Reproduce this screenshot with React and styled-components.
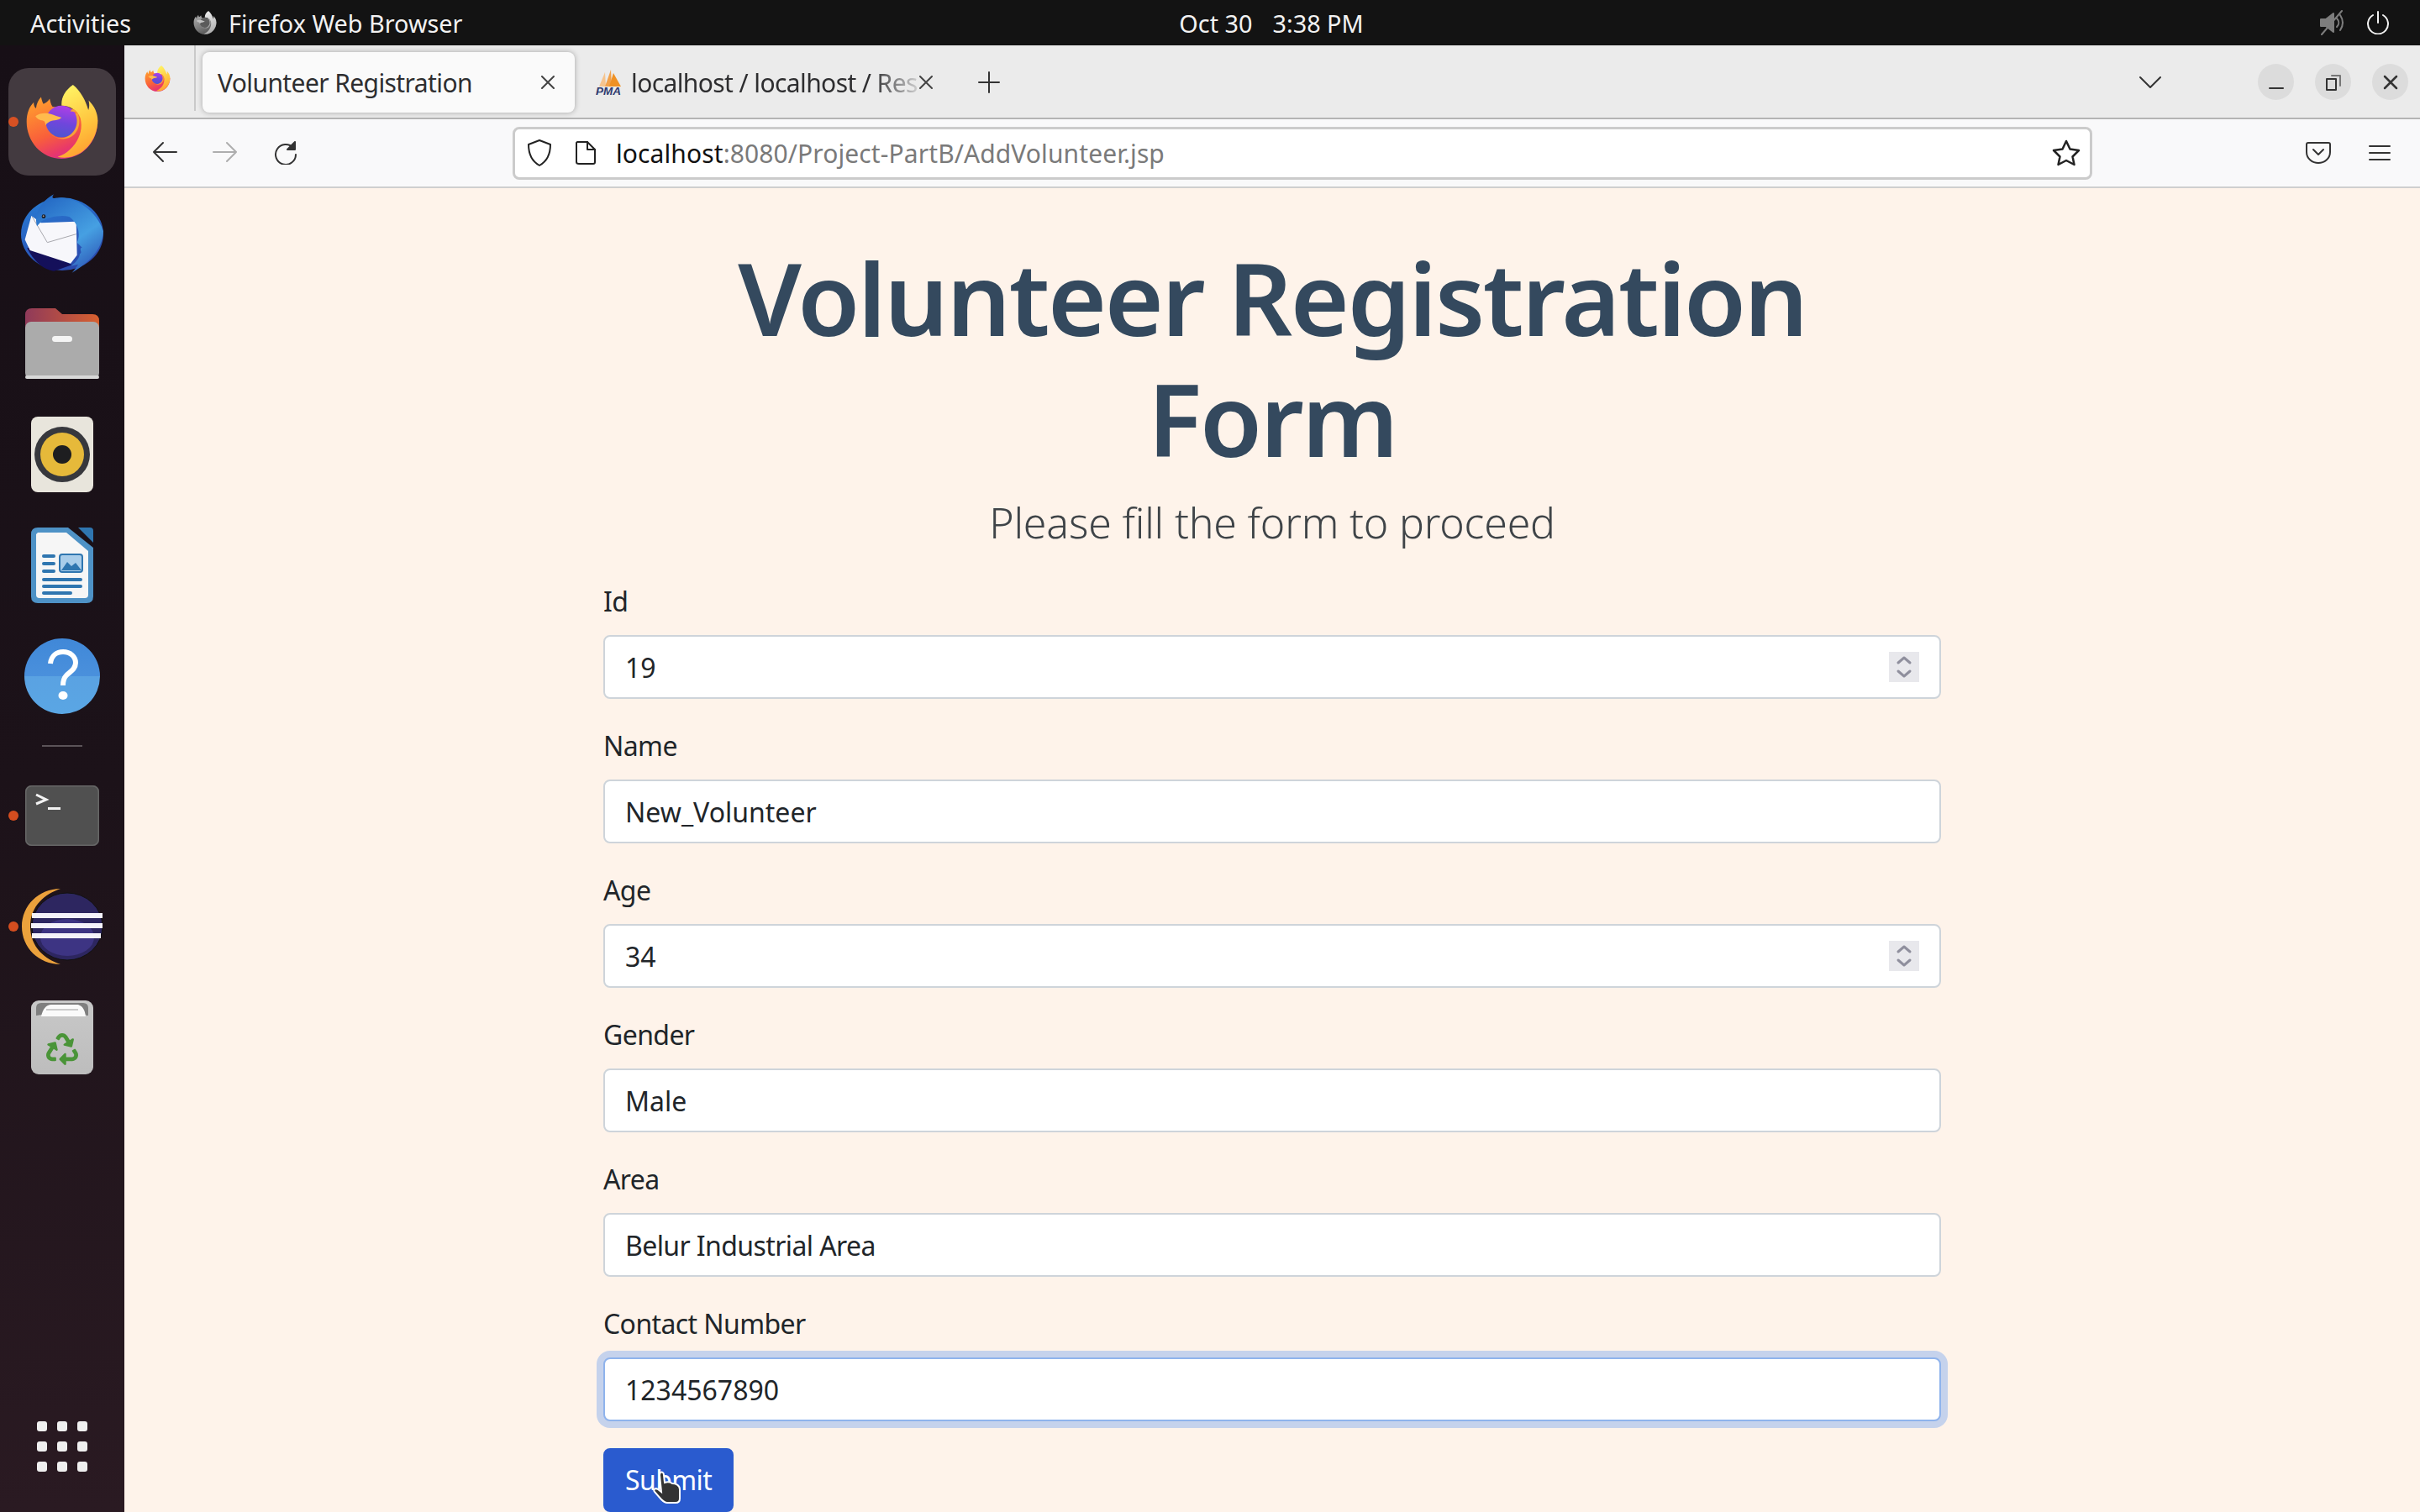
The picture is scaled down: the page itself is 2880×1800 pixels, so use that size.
import React from 'react';
import styled, { createGlobalStyle } from 'styled-components';
import { FaRecycle } from 'react-icons/fa';

const GlobalStyle = createGlobalStyle`
  html, body {
    margin: 0;
    padding: 0;
    background: #131313;
  }
  * {
    box-sizing: border-box;
  }
`;

const UI_FONT = `"Noto Sans", "Open Sans", sans-serif`;

const Screen = styled.div`
  width: 2880px;
  height: 1800px;
  overflow: hidden;
  display: flex;
  flex-direction: column;
  font-family: ${UI_FONT};
`;

const TopBar = styled.header`
  height: 54px;
  flex: none;
  background: #131313;
  color: #f2f2f2;
  display: grid;
  grid-template-columns: 1fr auto 1fr;
  align-items: center;
  padding: 0 36px;
  font-size: 28.8px;
`;

const TopLeft = styled.div`
  display: flex;
  align-items: center;
`;

const AppName = styled.div`
  display: flex;
  align-items: center;
  gap: 14px;
  margin-left: 74px;
  svg {
    filter: grayscale(1);
  }
`;

const Clock = styled.div`
  display: flex;
  gap: 24px;
  margin-left: 146px;
`;

const TopRight = styled.div`
  display: flex;
  justify-content: flex-end;
  align-items: center;
  gap: 26px;
`;

const Desktop = styled.div`
  flex: 1;
  display: flex;
  min-height: 0;
`;

const Dock = styled.nav`
  width: 148px;
  flex: none;
  background: linear-gradient(180deg, #170f16 0%, #1c1219 50%, #2a1a22 100%);
  padding: 25px 0 48px;
  display: flex;
  flex-direction: column;
  align-items: center;
`;

const DockItem = styled.div`
  position: relative;
  width: 148px;
  height: 132px;
  flex: none;
  display: flex;
  align-items: center;
  justify-content: center;
`;

const ActiveTile = styled.div`
  width: 128px;
  height: 128px;
  border-radius: 24px;
  background: #433a40;
  display: flex;
  align-items: center;
  justify-content: center;
`;

const RunDot = styled.span`
  position: absolute;
  left: 10px;
  top: 60px;
  width: 12px;
  height: 12px;
  border-radius: 50%;
  background: #e95420;
  opacity: 0.9;
`;

const DockRule = styled.div`
  width: 48px;
  height: 34px;
  flex: none;
  display: flex;
  align-items: center;
  &::after {
    content: '';
    width: 100%;
    height: 2px;
    background: #5b5358;
  }
`;

const AppGrid = styled.div`
  margin-top: auto;
  display: grid;
  grid-template-columns: repeat(3, 12px);
  gap: 12px;
  span {
    width: 12px;
    height: 12px;
    border-radius: 3px;
    background: #efefef;
  }
`;

const Browser = styled.div`
  flex: 1;
  min-width: 0;
  display: flex;
  flex-direction: column;
`;

const TabStrip = styled.div`
  height: 88px;
  flex: none;
  background: #ebebeb;
  border-bottom: 2px solid #b4b4b4;
  display: flex;
  align-items: flex-start;
  padding-top: 8px;
  color: #2e2e30;
  font-size: 30px;
`;

const ViewButton = styled.div`
  width: 85px;
  height: 78px;
  margin-top: -8px;
  padding-left: 24px;
  display: flex;
  align-items: center;
  border-right: 2px solid #c9c9c9;
  margin-right: 8px;
`;

const Tab = styled.div`
  position: relative;
  width: ${(p) => p.$width}px;
  height: 72px;
  flex: none;
  border-radius: 8px;
  display: flex;
  align-items: center;
  white-space: nowrap;
  padding-left: ${(p) => p.$pad}px;
  gap: 10px;
  background: ${(p) => (p.$active ? '#fafafa' : 'transparent')};
  box-shadow: ${(p) => (p.$active ? '0 0 6px rgba(0, 0, 0, 0.3)' : 'none')};
`;

const TabTitle = styled.span`
  letter-spacing: -0.6px;
`;

const FadeTitle = styled(TabTitle)`
  -webkit-mask-image: linear-gradient(90deg, #000 84%, rgba(0, 0, 0, 0.15) 100%);
  mask-image: linear-gradient(90deg, #000 84%, rgba(0, 0, 0, 0.15) 100%);
`;

const TabClose = styled.span`
  position: absolute;
  right: ${(p) => p.$right}px;
  top: 28px;
  display: flex;
`;

const NewTab = styled.div`
  margin: 23px 0 0 50px;
  display: flex;
`;

const WindowControls = styled.div`
  margin-left: auto;
  display: flex;
  align-items: center;
  height: 43px;
  margin-top: 14px;
  padding-right: 14px;
`;

const ListTabs = styled.div`
  display: flex;
  margin-right: 115px;
`;

const WindowButton = styled.div`
  width: 43px;
  height: 43px;
  border-radius: 50%;
  background: #dcdcdc;
  display: flex;
  align-items: center;
  justify-content: center;
  margin-left: ${(p) => (p.$first ? 0 : 25)}px;
`;

const NavBar = styled.div`
  height: 82px;
  flex: none;
  background: #f9f9fa;
  border-bottom: 2px solid #cfcfcf;
  display: flex;
  align-items: center;
  position: relative;
`;

const NavIcons = styled.div`
  width: 462px;
  flex: none;
  padding-left: 33px;
  display: flex;
  gap: 42px;
`;

const UrlBox = styled.div`
  width: 1880px;
  height: 63px;
  flex: none;
  background: #fff;
  border: 3px solid #cbcbcb;
  border-radius: 8px;
  display: flex;
  align-items: center;
  padding-left: 14px;
  font-size: 30px;
  color: #7a7a7a;
`;

const PageGlyph = styled.div`
  display: flex;
  margin-left: 26px;
`;

const UrlHost = styled.span`
  color: #111;
`;

const UrlText = styled.div`
  margin-left: 22px;
  letter-spacing: 0.1px;
  white-space: nowrap;
`;

const Star = styled.div`
  margin-left: auto;
  margin-right: 11px;
  display: flex;
`;

const NavEnd = styled.div`
  flex: 1;
  display: flex;
  justify-content: flex-end;
  align-items: center;
  gap: 45px;
  padding-right: 35px;
`;

const Page = styled.main`
  flex: 1;
  min-height: 0;
  background: #fef3ea;
  overflow: hidden;
`;

const Container = styled.div`
  width: 1592px;
  margin: 0 auto;
  padding-top: 58px;
  color: #212529;
`;

const Heading = styled.h1`
  margin: 0 0 16px;
  font-size: 120px;
  line-height: 144px;
  font-weight: 600;
  letter-spacing: -2.4px;
  text-align: center;
  color: #34495e;
`;

const Lead = styled.p`
  margin: 0 0 34px;
  font-size: 50px;
  line-height: 72px;
  font-weight: 300;
  letter-spacing: -0.18px;
  text-align: center;
  color: #3f4448;
`;

const Field = styled.div`
  margin-bottom: 32px;
  position: relative;
`;

const Label = styled.label`
  display: block;
  font-size: 32px;
  line-height: 48px;
  letter-spacing: -0.6px;
  margin-bottom: 16px;
`;

const Control = styled.input`
  display: block;
  width: 100%;
  height: 76px;
  padding: 12px 24px;
  font: inherit;
  font-size: 32px;
  line-height: 48px;
  letter-spacing: ${(p) => p.$track || 0}px;
  color: #212529;
  background: #fff;
  border: 2px solid ${(p) => (p.$focused ? '#8fb3ec' : '#ced4da')};
  border-radius: 8px;
  box-shadow: ${(p) => (p.$focused ? '0 0 0 8px #c5d2ec' : 'none')};
  outline: none;
  appearance: textfield;
  -moz-appearance: textfield;
  &::-webkit-outer-spin-button,
  &::-webkit-inner-spin-button {
    -webkit-appearance: none;
    margin: 0;
  }
`;

const Spinner = styled.div`
  position: absolute;
  right: 26px;
  bottom: 20px;
  width: 36px;
  height: 36px;
  background: #e8e8ec;
  display: flex;
  align-items: center;
  justify-content: center;
`;

const SubmitButton = styled.button`
  position: relative;
  height: 76px;
  padding: 12px 24px;
  font: inherit;
  font-size: 32px;
  line-height: 48px;
  letter-spacing: -0.6px;
  color: #fff;
  background: #2a5bcf;
  border: 2px solid #2a5bcf;
  border-radius: 8px;
`;

const Pointer = styled.svg`
  position: absolute;
  left: 56px;
  top: 25px;
`;

const Line = ({ w = 24, h = 24, children, stroke = '#333', sw = 2 }) => (
  <svg width={w} height={h} viewBox={`0 0 ${w} ${h}`} fill="none" stroke={stroke} strokeWidth={sw} strokeLinecap="round" strokeLinejoin="round">
    {children}
  </svg>
);

// paths are in the coordinates of a 250x260 crop of the dock icon
function FirefoxLogo({ size }) {
  return (
    <svg width={size} height={size} viewBox="32 35 260 260">
      <defs>
        <linearGradient id="ffBody" x1="0.1" y1="0.1" x2="0.55" y2="1">
          <stop offset="0" stopColor="#ff9a2e" />
          <stop offset="0.55" stopColor="#f9603a" />
          <stop offset="0.85" stopColor="#e8386a" />
          <stop offset="1" stopColor="#d92f8a" />
        </linearGradient>
        <linearGradient id="ffFlame" x1="0.4" y1="0" x2="0.7" y2="1">
          <stop offset="0" stopColor="#fff263" />
          <stop offset="0.6" stopColor="#ffc23c" />
          <stop offset="1" stopColor="#ff9a30" />
        </linearGradient>
        <linearGradient id="ffGlobe" x1="0.6" y1="0" x2="0.4" y2="1">
          <stop offset="0" stopColor="#b03fe6" />
          <stop offset="0.55" stopColor="#6f46dc" />
          <stop offset="1" stopColor="#4f56cf" />
        </linearGradient>
      </defs>
      <path
        d="M37 165 C37 135 46 112 62 96 C62 106 64 112 70 118 C72 102 78 88 88 78 C90 88 92 96 96 102 C104 100 112 94 118 84 C120 92 122 104 128 112 L200 120 L287 160 C287 240 230 295 160 295 C90 295 37 235 37 165 Z"
        fill="url(#ffBody)"
      />
      <path
        d="M200 35 C172 54 158 80 160 108 C190 108 216 124 226 152 C236 190 222 232 190 262 C176 276 160 284 146 288 C220 306 287 240 287 160 C287 136 276 110 255 90 C258 102 258 114 254 124 C244 88 226 56 200 35 Z"
        fill="url(#ffFlame)"
      />
      <circle cx="160" cy="164" r="56" fill="url(#ffGlobe)" />
      <path
        d="M196 122 C208 122 214 128 216 134 C205 128 198 130 190 128 Z M216 134 C232 170 216 212 184 222 C162 230 130 224 112 196 C122 212 142 224 162 222 C200 218 226 176 208 136 Z"
        fill="#f7a338"
      />
      <path
        d="M68 145 C82 134 106 132 122 138 C134 142 148 148 160 150 C150 160 132 158 118 164 C112 168 106 172 103 178 C104 166 98 160 88 160 C80 158 72 152 68 145 Z"
        fill="#ffbb4d"
      />
    </svg>
  );
}

function Thunderbird() {
  return (
    <svg width="98" height="95" viewBox="18 25 294 283">
      <defs>
        <linearGradient id="tbBody" x1="0.3" y1="0" x2="0.7" y2="1">
          <stop offset="0" stopColor="#2879d2" />
          <stop offset="1" stopColor="#2b46ab" />
        </linearGradient>
        <linearGradient id="tbWing" x1="0.2" y1="0" x2="0.8" y2="1">
          <stop offset="0" stopColor="#2468c4" />
          <stop offset="0.6" stopColor="#46a0e2" />
          <stop offset="1" stopColor="#2d55b5" />
        </linearGradient>
      </defs>
      <ellipse cx="165" cy="170" rx="147" ry="130" fill="url(#tbBody)" />
      <path d="M40 220 C70 280 110 300 136 302 L200 280 L60 215 Z" fill="#14105a" />
      <path d="M32 190 L55 105 L90 130 L215 125 L218 245 L195 275 L50 228 Z" fill="#f7f7fb" />
      <path d="M58 108 L112 200 L215 170" fill="none" stroke="#a8a8ae" strokeWidth="3" />
      <path
        d="M75 142 C62 95 92 52 135 28 C126 42 128 44 160 40 C220 42 290 90 312 160 C310 210 280 262 200 308 C210 296 216 288 222 278 L195 284 C216 270 226 256 228 240 C240 236 222 222 236 218 L218 200 C232 170 222 130 190 108 C160 100 110 110 90 125 Z"
        fill="url(#tbWing)"
      />
      <circle cx="99" cy="107" r="7" fill="#1a1a22" />
      <circle cx="98" cy="106" r="3" fill="#9a9a9a" />
    </svg>
  );
}

function FilesIcon() {
  return (
    <svg width="88" height="84" viewBox="0 0 88 84">
      <defs>
        <linearGradient id="fiTab" x1="0" y1="0" x2="1" y2="0">
          <stop offset="0" stopColor="#8f3a5a" />
          <stop offset="1" stopColor="#d8602f" />
        </linearGradient>
      </defs>
      <path d="M0 22 V8 Q0 0 8 0 H36 L44 7 H80 Q88 7 88 15 V30 H0 Z" fill="url(#fiTab)" />
      <rect x="0" y="16" width="88" height="68" rx="7" fill="#ababab" />
      <rect x="0" y="80" width="88" height="4" rx="2" fill="#d8d8d8" />
      <rect x="32" y="33" width="24" height="7" rx="3.5" fill="#f4f4f4" />
    </svg>
  );
}

function RhythmboxIcon() {
  return (
    <svg width="74" height="90" viewBox="0 0 74 90">
      <rect width="74" height="90" rx="8" fill="#e8e5dc" />
      <circle cx="37" cy="45" r="33" fill="#37383d" />
      <circle cx="37" cy="45" r="26" fill="#e6b93a" />
      <circle cx="37" cy="45" r="11" fill="#1e1e20" />
    </svg>
  );
}

function WriterIcon() {
  return (
    <svg width="74" height="90" viewBox="0 0 74 90">
      <path d="M8 0 H44 L74 24 V82 Q74 90 66 90 H8 Q0 90 0 82 V8 Q0 0 8 0 Z" fill="#4e92c6" />
      <path d="M56 0 H70 Q74 0 74 4 V18 Z" fill="#2f76b0" />
      <path d="M8 6 H42 L68 28 V80 Q68 84 64 84 H10 Q6 84 6 80 V8 Z" fill="#f6f6f6" />
      <g fill="#2f76b0">
        <rect x="13" y="32" width="16" height="4" rx="2" />
        <rect x="13" y="41" width="16" height="4" rx="2" />
        <rect x="13" y="50" width="16" height="4" rx="2" />
        <rect x="13" y="60" width="48" height="4" rx="2" />
        <rect x="13" y="68" width="48" height="4" rx="2" />
        <rect x="13" y="76" width="36" height="4" rx="2" />
      </g>
      <rect x="34" y="32" width="27" height="21" rx="3" fill="#a9cdea" stroke="#2f76b0" strokeWidth="2" />
      <path d="M36 51 L43 41 L48 46 L53 42 L60 51 Z" fill="#2f76b0" />
    </svg>
  );
}

function HelpIcon() {
  return (
    <svg width="90" height="90" viewBox="0 0 90 90">
      <defs>
        <linearGradient id="hpBall" x1="0" y1="0" x2="0" y2="1">
          <stop offset="0" stopColor="#4088d8" />
          <stop offset="0.5" stopColor="#4a90dc" />
          <stop offset="0.5" stopColor="#5aa2e2" />
          <stop offset="1" stopColor="#5aa6e4" />
        </linearGradient>
      </defs>
      <circle cx="45" cy="45" r="45" fill="url(#hpBall)" />
      <path d="M31 30 C32 20 39 16 46 16 C55 16 61 22 61 29 C61 37 54 40 50 44 C47 47 46 50 46 56" fill="none" stroke="#fff" strokeWidth="6" />
      <ellipse cx="46" cy="68" rx="5.5" ry="5" fill="#fff" />
    </svg>
  );
}

function TerminalIcon() {
  return (
    <svg width="88" height="72" viewBox="0 0 88 72">
      <rect width="88" height="72" rx="7" fill="#505050" />
      <rect x="0.75" y="0.75" width="86.5" height="70.5" rx="7" fill="none" stroke="#666" strokeWidth="1.5" />
      <path d="M13 11 L25 17 L13 22" fill="none" stroke="#f2f2f2" strokeWidth="3" />
      <rect x="27" y="26" width="15" height="3" fill="#f2f2f2" />
    </svg>
  );
}

function EclipseIcon() {
  return (
    <svg width="96" height="90" viewBox="0 0 96 90">
      <path d="M46 0 C20 0 0 20 0 45 C0 70 20 90 46 90 C28 84 10 70 10 45 C10 20 28 6 46 0 Z" fill="#eba13c" />
      <ellipse cx="54" cy="45" rx="42" ry="40" fill="#2d2660" stroke="#111" strokeWidth="1" />
      <ellipse cx="54" cy="58" rx="32" ry="22" fill="#3d3483" />
      <g fill="#f4f2fa">
        <rect x="12" y="29" width="84" height="6" />
        <rect x="11" y="41" width="85" height="6" />
        <rect x="12" y="53" width="82" height="6" />
      </g>
    </svg>
  );
}

function TrashIcon() {
  return (
    <svg width="74" height="88" viewBox="0 0 74 88">
      <defs>
        <linearGradient id="trBody" x1="0" y1="0" x2="0" y2="1">
          <stop offset="0" stopColor="#c8c8c8" />
          <stop offset="1" stopColor="#bdbdbd" />
        </linearGradient>
      </defs>
      <rect width="74" height="88" rx="9" fill="url(#trBody)" />
      <path d="M6 18 V9 Q6 3 12 3 H62 Q68 3 68 9 V18 C60 16 14 16 6 18 Z" fill="#7f7f7f" />
      <path d="M12 19 C14 10 18 5 24 5 H56 C62 7 64 12 65 19 Z" fill="#fafafa" />
      <path d="M18 11 H56" stroke="#bcbcbc" strokeWidth="1.5" fill="none" />
      <FaRecycle x="18" y="39" size="38" color="#4a9438" />
    </svg>
  );
}

function PmaIcon() {
  return (
    <svg width="32" height="36" viewBox="0 0 32 36">
      <path d="M4 23 L11 6 L12 23 Z" fill="#f6c48e" />
      <path d="M11 23 L18 3 L19 23 Z" fill="#f2a14a" />
      <path d="M16 23 L21 7 L30 23 Z" fill="#ef9124" />
      <text x="0" y="33" fontFamily="Liberation Sans, sans-serif" fontStyle="italic" fontWeight="700" fontSize="13.5" fill="#2f3a6e">
        PMA
      </text>
    </svg>
  );
}

const SpinnerArrows = () => (
  <Line w={20} h={30} stroke="#8f8f9d" sw={3}>
    <path d="M3 10 L10 4 L17 10" />
    <path d="M3 20 L10 26 L17 20" />
  </Line>
);

const fields = [
  { label: 'Id', value: '19', number: true },
  { label: 'Name', value: 'New_Volunteer' },
  { label: 'Age', value: '34', number: true },
  { label: 'Gender', value: 'Male' },
  { label: 'Area', value: 'Belur Industrial Area', track: -0.6 },
  { label: 'Contact Number', value: '1234567890', focused: true }
];

function DockBar() {
  return (
    <Dock>
      <DockItem>
        <RunDot />
        <ActiveTile>
          <FirefoxLogo size={88} />
        </ActiveTile>
      </DockItem>
      <DockItem><Thunderbird /></DockItem>
      <DockItem><FilesIcon /></DockItem>
      <DockItem><RhythmboxIcon /></DockItem>
      <DockItem><WriterIcon /></DockItem>
      <DockItem><HelpIcon /></DockItem>
      <DockRule />
      <DockItem>
        <RunDot />
        <TerminalIcon />
      </DockItem>
      <DockItem>
        <RunDot />
        <EclipseIcon />
      </DockItem>
      <DockItem><TrashIcon /></DockItem>
      <AppGrid>
        {Array.from({ length: 9 }, (_, i) => (
          <span key={i} />
        ))}
      </AppGrid>
    </Dock>
  );
}

function Tabs() {
  return (
    <TabStrip>
      <ViewButton>
        <FirefoxLogo size={31} />
      </ViewButton>
      <Tab $active $width={443} $pad={18}>
        <TabTitle>Volunteer Registration</TabTitle>
        <TabClose $right={24}>
          <Line w={16} h={16} stroke="#444">
            <path d="M1 1 L15 15 M15 1 L1 15" />
          </Line>
        </TabClose>
      </Tab>
      <Tab $width={430} $pad={25}>
        <PmaIcon />
        <FadeTitle>localhost / localhost / Res</FadeTitle>
        <TabClose $right={4}>
          <Line w={16} h={16} stroke="#444">
            <path d="M1 1 L15 15 M15 1 L1 15" />
          </Line>
        </TabClose>
      </Tab>
      <NewTab>
        <Line w={26} h={26} stroke="#333">
          <path d="M13 1 V25 M1 13 H25" />
        </Line>
      </NewTab>
      <WindowControls>
        <ListTabs>
          <Line w={26} h={16} stroke="#333">
            <path d="M1 2 L13 14 L25 2" />
          </Line>
        </ListTabs>
        <WindowButton $first>
          <Line w={18} h={18} stroke="#333">
            <path d="M1 16 H17" />
          </Line>
        </WindowButton>
        <WindowButton>
          <Line w={18} h={20} stroke="#333">
            <rect x="1" y="6" width="11" height="13" />
            <path d="M7 2 H17 V14" stroke="#777" />
          </Line>
        </WindowButton>
        <WindowButton>
          <Line w={18} h={18} stroke="#333" sw={2.5}>
            <path d="M2 2 L16 16 M16 2 L2 16" />
          </Line>
        </WindowButton>
      </WindowControls>
    </TabStrip>
  );
}

function Navigation() {
  return (
    <NavBar>
      <NavIcons>
        <Line w={30} h={26} stroke="#333">
          <path d="M29 13 H2 M13 2 L2 13 L13 24" />
        </Line>
        <Line w={30} h={26} stroke="#aeaeae">
          <path d="M1 13 H28 M17 2 L28 13 L17 24" />
        </Line>
        <Line w={30} h={28} stroke="#333">
          <path d="M24 8 A12 12 0 1 0 27 16" />
          <path d="M26 1 V10 H17 Z" fill="#333" />
        </Line>
      </NavIcons>
      <UrlBox>
        <Line w={30} h={34} stroke="#222">
          <path d="M15 2 L28 7 C28 18 24 27 15 32 C6 27 2 18 2 7 Z" />
        </Line>
        <PageGlyph>
          <Line w={28} h={30} stroke="#222">
            <path d="M4 2 H16 L25 11 V26 Q25 28 23 28 H6 Q3 28 3 26 V3 Z" />
            <path d="M16 2 V11 H25" />
          </Line>
        </PageGlyph>
        <UrlText>
          <UrlHost>localhost</UrlHost>:8080/Project-PartB/AddVolunteer.jsp
        </UrlText>
        <Star>
          <Line w={34} h={32} stroke="#222" sw={2.5}>
            <path d="M17 2 L21.5 11.5 L32 13 L24.5 20.5 L26.5 30 L17 25 L7.5 30 L9.5 20.5 L2 13 L12.5 11.5 Z" />
          </Line>
        </Star>
      </UrlBox>
      <NavEnd>
        <Line w={30} h={26} stroke="#333">
          <path d="M3 1 H27 Q29 1 29 3 V12 C29 20 22 25 15 25 C8 25 1 20 1 12 V3 Q1 1 3 1 Z" />
          <path d="M9 9 L15 15 L21 9" />
        </Line>
        <Line w={26} h={20} stroke="#333">
          <path d="M1 2 H25 M1 10 H25 M1 18 H25" />
        </Line>
      </NavEnd>
    </NavBar>
  );
}

function VolunteerForm() {
  return (
    <Container>
      <Heading>
        Volunteer Registration
        <br />
        Form
      </Heading>
      <Lead>Please fill the form to proceed</Lead>
      <form>
        {fields.map((f) => (
          <Field key={f.label}>
            <Label>{f.label}</Label>
            <Control type={f.number ? 'number' : 'text'} value={f.value} readOnly $focused={f.focused} $track={f.track} />
            {f.number && (
              <Spinner>
                <SpinnerArrows />
              </Spinner>
            )}
          </Field>
        ))}
        <SubmitButton type="button">
          Submit
          <Pointer width="36" height="40" viewBox="0 0 36 40">
            <path
              d="M10 2 C12 1 14 2 14 5 L15 14 C18 13 21 13 24 15 C28 15 33 17 33 22 L33 33 C33 36 31 38 28 38 L18 38 C15 38 13 36 11 34 L3 25 C1 22 4 20 7 22 L11 25 L9 5 C9 4 9 3 10 2 Z"
              fill="#333"
              stroke="#fff"
              strokeWidth="2"
            />
          </Pointer>
        </SubmitButton>
      </form>
    </Container>
  );
}

export default function App() {
  return (
    <Screen>
      <GlobalStyle />
      <TopBar>
        <TopLeft>
          <span>Activities</span>
          <AppName>
            <FirefoxLogo size={28} />
            <span>Firefox Web Browser</span>
          </AppName>
        </TopLeft>
        <Clock>
          <span>Oct 30</span>
          <span>3:38 PM</span>
        </Clock>
        <TopRight>
          <Line w={30} h={30} stroke="#7d7d7d">
            <path d="M2 11 H8 L17 4 V26 L8 19 H2 Z" fill="#7d7d7d" />
            <path d="M21 10 C24 13 24 17 21 20" />
            <path d="M25 6 C29 12 29 18 25 24" />
            <path d="M27 1 L3 29" />
          </Line>
          <Line w={28} h={28} stroke="#f2f2f2">
            <path d="M14 1 V14" />
            <path d="M8 5 A12 12 0 1 0 20 5" />
          </Line>
        </TopRight>
      </TopBar>
      <Desktop>
        <DockBar />
        <Browser>
          <Tabs />
          <Navigation />
          <Page>
            <VolunteerForm />
          </Page>
        </Browser>
      </Desktop>
    </Screen>
  );
}
